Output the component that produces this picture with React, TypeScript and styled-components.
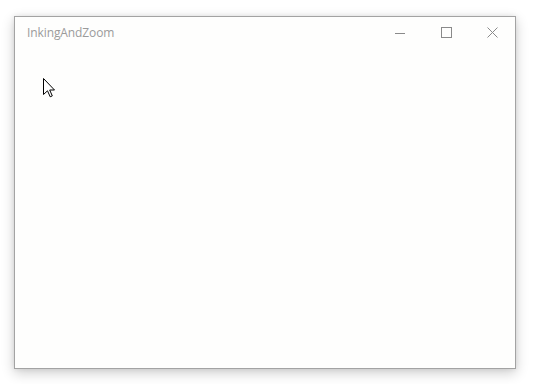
import React from "react";
import styled, { createGlobalStyle } from "styled-components";

const Global = createGlobalStyle`
  html, body { margin: 0; padding: 0; background: #ffffff; }
  body { width: 536px; height: 384px; overflow: hidden; }
`;

const Stage = styled.div`
  padding: 16px 0 0 14px;
`;

const Window = styled.div`
  position: relative;
  box-sizing: border-box;
  width: 502px;
  height: 353px;
  border: 1px solid #a3a3a3;
  background: #fefefd;
  box-shadow: 0 4px 12px rgba(0, 0, 0, 0.2), 0 0 5px rgba(0, 0, 0, 0.08);
  display: flex;
  flex-direction: column;
`;

const TitleBar = styled.div`
  height: 31px;
  display: flex;
  align-items: center;
  justify-content: space-between;
`;

const Title = styled.span`
  padding-left: 12px;
  padding-bottom: 1px;
  font-family: "Open Sans", "Noto Sans", sans-serif;
  font-size: 12px;
  color: #9b9b9b;
  letter-spacing: -0.1px;
`;

const Controls = styled.div`
  display: flex;
  height: 100%;
`;

const CtlButton = styled.div`
  width: 46px;
  height: 100%;
  display: flex;
  align-items: center;
  justify-content: center;
  color: #8a8a8a;
`;

const Content = styled.div`
  flex: 1;
`;

const Cursor = styled.svg`
  position: absolute;
  left: 28px;
  top: 61px;
`;

export default function App() {
  return (
    <>
      <Global />
      <Stage>
        <Window>
          <TitleBar>
            <Title>InkingAndZoom</Title>
            <Controls>
              <CtlButton>
                <svg width="10" height="10" viewBox="0 0 10 10">
                  <line x1="0" y1="5.5" x2="10" y2="5.5" stroke="currentColor" strokeWidth="1" />
                </svg>
              </CtlButton>
              <CtlButton>
                <svg width="11" height="11" viewBox="0 0 11 11">
                  <rect x="0.5" y="0.5" width="10" height="10" fill="none" stroke="currentColor" strokeWidth="1" />
                </svg>
              </CtlButton>
              <CtlButton>
                <svg width="11" height="11" viewBox="0 0 11 11">
                  <path d="M0.5 0.5 L10.5 10.5 M10.5 0.5 L0.5 10.5" stroke="currentColor" strokeWidth="1" />
                </svg>
              </CtlButton>
            </Controls>
          </TitleBar>
          <Content />
          <Cursor width="13" height="20" viewBox="0 0 13 20">
            <path
              d="M0.5 0.5 L0.5 16.5 L4.5 12.8 L7.2 18.8 L9.3 17.9 L6.7 12 L11.5 12 Z"
              fill="#ffffff"
              stroke="#000000"
              strokeWidth="1"
              strokeLinejoin="miter"
            />
          </Cursor>
        </Window>
      </Stage>
    </>
  );
}
